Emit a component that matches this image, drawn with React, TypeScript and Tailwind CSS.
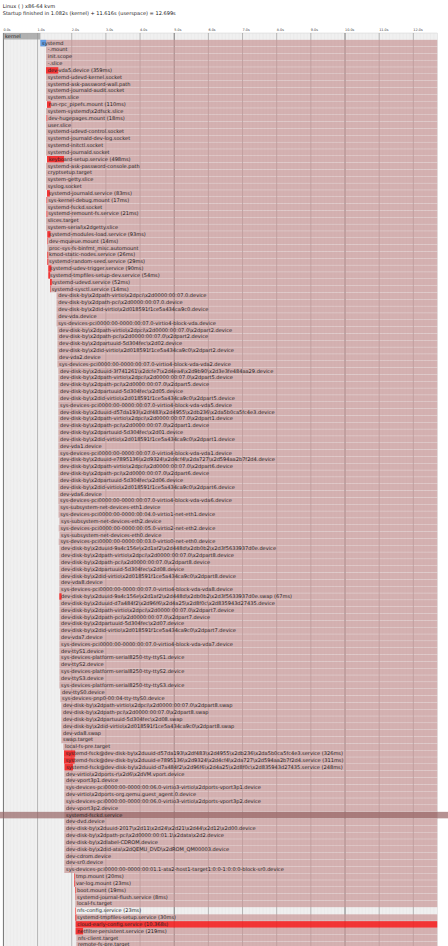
// systemd-analyze plot, bars are in chart units (100 units = 1s, 20 units = 1 row)
const S = 0.3416;
const CHART_H = 925;
const TOTAL = 1269.9;
const ROW = 20;

type Row = { name: string; x: number; ms?: number; noActive?: boolean; deact?: boolean; toEnd?: boolean };

const by = 'dev-disk-by\\x2d';
const pci7 = 'sys-devices-pci0000:00-0000:00:07.0-virtio4-block-vda';

function partRows(n: number, x: number, uuid: string | null): Row[] {
  const out: Row[] = [];
  if (uuid) out.push({ name: `${by}uuid-${uuid}.device`, x });
  out.push(
    { name: `${by}path-virtio\\x2dpci\\x2d0000:00:07.0\\x2dpart${n}.device`, x },
    { name: `${by}path-pci\\x2d0000:00:07.0\\x2dpart${n}.device`, x },
    { name: `${by}partuuid-5d304fec\\x2d0${n}.device`, x },
    { name: `${by}id-virtio\\x2d018591f1ce5a434ca9c0\\x2dpart${n}.device`, x },
    { name: `dev-vda${n}.device`, x },
    { name: `${pci7}-vda${n}.device`, x },
  );
  return out;
}

const rows: Row[] = [
  { name: '-.mount', x: 46 },
  { name: 'init.scope', x: 46 },
  { name: '-.slice', x: 46 },
  { name: 'dev-vda5.device', x: 46, ms: 359 },
  { name: 'systemd-udevd-kernel.socket', x: 46 },
  { name: 'systemd-ask-password-wall.path', x: 46 },
  { name: 'systemd-journald-audit.socket', x: 46 },
  { name: 'system.slice', x: 46 },
  { name: 'run-rpc_pipefs.mount', x: 47, ms: 110 },
  { name: 'system-systemd\\x2dfsck.slice', x: 46 },
  { name: 'dev-hugepages.mount', x: 46.5, ms: 18 },
  { name: 'user.slice', x: 46 },
  { name: 'systemd-udevd-control.socket', x: 46 },
  { name: 'systemd-journald-dev-log.socket', x: 46 },
  { name: 'systemd-initctl.socket', x: 46 },
  { name: 'systemd-journald.socket', x: 46 },
  { name: 'keyboard-setup.service', x: 47, ms: 498 },
  { name: 'systemd-ask-password-console.path', x: 46 },
  { name: 'cryptsetup.target', x: 46 },
  { name: 'system-getty.slice', x: 46 },
  { name: 'syslog.socket', x: 46 },
  { name: 'systemd-journald.service', x: 47, ms: 83 },
  { name: 'sys-kernel-debug.mount', x: 46.5, ms: 17 },
  { name: 'systemd-fsckd.socket', x: 46 },
  { name: 'systemd-remount-fs.service', x: 46.5, ms: 21 },
  { name: 'slices.target', x: 46 },
  { name: 'system-serial\\x2dgetty.slice', x: 46 },
  { name: 'systemd-modules-load.service', x: 47.3, ms: 93 },
  { name: 'dev-mqueue.mount', x: 47.3, ms: 14 },
  { name: 'proc-sys-fs-binfmt_misc.automount', x: 47.3 },
  { name: 'kmod-static-nodes.service', x: 47.3, ms: 26 },
  { name: 'systemd-random-seed.service', x: 47.3, ms: 29 },
  { name: 'systemd-udev-trigger.service', x: 48.3, ms: 90 },
  { name: 'systemd-tmpfiles-setup-dev.service', x: 48.3, ms: 54 },
  { name: 'systemd-udevd.service', x: 50, ms: 52 },
  { name: 'systemd-sysctl.service', x: 50, ms: 14 },
  { name: `${by}path-virtio\\x2dpci\\x2d0000:00:07.0.device`, x: 56.5 },
  { name: `${by}path-pci\\x2d0000:00:07.0.device`, x: 56.5 },
  { name: `${by}id-virtio\\x2d018591f1ce5a434ca9c0.device`, x: 56.5 },
  { name: 'dev-vda.device', x: 56.5 },
  { name: `${pci7}.device`, x: 56.5 },
  ...partRows(2, 57.4, null),
  ...partRows(5, 58.3, '3f741261\\x2dcfe7\\x2d4ea4\\x2d9b90\\x2d3e3fe484aa29').slice(0, 5),
  { name: `${pci7}-vda5.device`, x: 58.3 },
  ...partRows(1, 58.3, 'd57da193\\x2df483\\x2d4955\\x2db236\\x2da5b0ca5fc4e3'),
  ...partRows(6, 58.3, 'e7895136\\x2d9324\\x2d4cf4\\x2da727\\x2d594aa2b7f2d4'),
  { name: 'sys-subsystem-net-devices-eth1.device', x: 58.5 },
  { name: 'sys-devices-pci0000:00-0000:00:04.0-virtio1-net-eth1.device', x: 58.5 },
  { name: 'sys-subsystem-net-devices-eth2.device', x: 59.4 },
  { name: 'sys-devices-pci0000:00-0000:00:05.0-virtio2-net-eth2.device', x: 58.7 },
  { name: 'sys-subsystem-net-devices-eth0.device', x: 59.4 },
  { name: 'sys-devices-pci0000:00-0000:00:03.0-virtio0-net-eth0.device', x: 58.7 },
  ...partRows(8, 59.3, '9a4c156e\\x2d1af2\\x2d448d\\x2db0b2\\x2d3f5633937d0e'),
  { name: `${by}uuid-9a4c156e\\x2d1af2\\x2d448d\\x2db0b2\\x2d3f5633937d0e.swap`, x: 59.3, ms: 67 },
  ...partRows(7, 59.4, 'd7a484f2\\x2d96f6\\x2d4a25\\x2d8f0c\\x2d835943d27435'),
  { name: 'dev-ttyS1.device', x: 59.4 },
  { name: 'sys-devices-platform-serial8250-tty-ttyS1.device', x: 59.4 },
  { name: 'dev-ttyS2.device', x: 59.4 },
  { name: 'sys-devices-platform-serial8250-tty-ttyS2.device', x: 59.4 },
  { name: 'dev-ttyS3.device', x: 59.4 },
  { name: 'sys-devices-platform-serial8250-tty-ttyS3.device', x: 59.4 },
  { name: 'dev-ttyS0.device', x: 60.3 },
  { name: 'sys-devices-pnp0-00:04-tty-ttyS0.device', x: 60.3 },
  { name: `${by}path-virtio\\x2dpci\\x2d0000:00:07.0\\x2dpart8.swap`, x: 61.3 },
  { name: `${by}path-pci\\x2d0000:00:07.0\\x2dpart8.swap`, x: 61.3 },
  { name: `${by}partuuid-5d304fec\\x2d08.swap`, x: 61.3 },
  { name: `${by}id-virtio\\x2d018591f1ce5a434ca9c0\\x2dpart8.swap`, x: 61.3 },
  { name: 'dev-vda8.swap', x: 61.3 },
  { name: 'swap.target', x: 61.3 },
  { name: 'local-fs-pre.target', x: 63.3 },
  { name: `systemd-fsck@${by}uuid-d57da193\\x2df483\\x2d4955\\x2db236\\x2da5b0ca5fc4e3.service`, x: 64, ms: 326 },
  { name: `systemd-fsck@${by}uuid-e7895136\\x2d9324\\x2d4cf4\\x2da727\\x2d594aa2b7f2d4.service`, x: 64, ms: 311 },
  { name: `systemd-fsck@${by}uuid-d7a484f2\\x2d96f6\\x2d4a25\\x2d8f0c\\x2d835943d27435.service`, x: 64.5, ms: 248 },
  { name: 'dev-virtio\\x2dports-r\\x2d6\\x2dVM.vport.device', x: 64.3 },
  { name: 'dev-vport3p1.device', x: 64.3 },
  { name: 'sys-devices-pci0000:00-0000:00:06.0-virtio3-virtio\\x2dports-vport3p1.device', x: 64.3 },
  { name: 'dev-virtio\\x2dports-org.qemu.guest_agent.0.device', x: 64.3 },
  { name: 'sys-devices-pci0000:00-0000:00:06.0-virtio3-virtio\\x2dports-vport3p2.device', x: 64.3 },
  { name: 'dev-vport3p2.device', x: 64.3 },
  { name: 'systemd-fsckd.service', x: 64.3, deact: true },
  { name: 'dev-dvd.device', x: 64.3 },
  { name: `${by}uuid-2017\\x2d11\\x2d24\\x2d21\\x2d44\\x2d12\\x2d00.device`, x: 64.3 },
  { name: `${by}path-pci\\x2d0000:00:01.1\\x2data\\x2d2.device`, x: 64.3 },
  { name: `${by}label-CDROM.device`, x: 64.3 },
  { name: `${by}id-ata\\x2dQEMU_DVD\\x2dROM_QM00003.device`, x: 64.3 },
  { name: 'dev-cdrom.device', x: 64.3 },
  { name: 'dev-sr0.device', x: 64.3 },
  { name: 'sys-devices-pci0000:00-0000:00:01.1-ata2-host1-target1:0:0-1:0:0:0-block-sr0.device', x: 64.3 },
  { name: 'tmp.mount', x: 74.3, ms: 20 },
  { name: 'var-log.mount', x: 74.3, ms: 23 },
  { name: 'boot.mount', x: 75.3, ms: 19 },
  { name: 'systemd-journal-flush.service', x: 75.3, ms: 8 },
  { name: 'local-fs.target', x: 75.3 },
  { name: 'nfs-config.service', x: 75.3, ms: 23, noActive: true },
  { name: 'systemd-tmpfiles-setup.service', x: 75.3, ms: 30 },
  { name: 'cloud-early-config.service', x: 75.6, ms: 10368, toEnd: true },
  { name: 'netfilter-persistent.service', x: 75.6, ms: 219 },
  { name: 'nfs-client.target', x: 76.3 },
  { name: 'remote-fs-pre.target', x: 76.3 },
];

const toUnits = (px: number) => (px - 3.4) / S;

function label(r: Row) {
  if (!r.ms) return r.name;
  return r.ms >= 1000 ? `${r.name} (${(r.ms / 1000).toFixed(3)}s)` : `${r.name} (${r.ms}ms)`;
}

function Grid() {
  const lines = [];
  for (let i = 0; i * 10 <= TOTAL; i++) {
    const x = i * 10;
    if (i % 10 === 0) {
      lines.push(<line key={i} x1={x} x2={x} y1={0} y2={(rows.length + 4) * ROW} strokeWidth={i % 50 === 0 ? 2 : 1} className="stroke-[#404040]" />);
      lines.push(
        <text key={`t${i}`} x={x} y={-5} className="fill-[#444] text-[10px]">
          {(i / 10).toFixed(1)}s
        </text>,
      );
    } else {
      lines.push(<line key={i} x1={x} x2={x} y1={0} y2={(rows.length + 4) * ROW} strokeWidth={1} className="stroke-[#e0e0e0]" />);
    }
  }
  return <g>{lines}</g>;
}

function UnitRow({ r, i }: { r: Row; i: number }) {
  const x = toUnits(r.x);
  const y = (i + 2) * ROW;
  const red = r.toEnd ? TOTAL - x : r.ms ? r.ms / 10 : 0;
  return (
    <g>
      {!r.noActive && <rect x={x} y={y} width={TOTAL - x} height={ROW - 1} className="fill-[#c89696] opacity-70" />}
      {r.deact && <rect x={-60} y={y} width={1500} height={ROW - 1} className="fill-[#966464] opacity-70" />}
      {red > 0 && <rect x={x} y={y} width={red} height={ROW - 1} className="fill-[#ff0000] opacity-70" />}
      <text x={x + 5} y={y + 14} className="fill-[#222] text-[14.8px]">
        {label(r)}
      </text>
    </g>
  );
}

export default function App() {
  return (
    <div className="h-[946px] w-[448px] overflow-hidden bg-white font-['DejaVu_Sans',sans-serif] text-[#222] [text-rendering:geometricPrecision]">
      <div className="pl-[2.7px] pt-[3.5px] pb-[3.5px] text-[5.05px] leading-[7px]">
        <div>Linux ( ) x86-64 kvm</div>
        <div>Startup finished in 1.082s (kernel) + 11.616s (userspace) = 12.699s</div>
      </div>
      <svg width={448} height={CHART_H} viewBox={`0 0 ${448 / S} ${CHART_H / S}`} className="block">
        <g transform={`translate(10, ${12 / S})`}>
          <rect x={0} y={0} width={TOTAL} height={(rows.length + 4) * ROW} className="fill-[#f0f0f0] stroke-[#c0c0c0]" />
          <Grid />
          <rect x={0} y={0} width={108.2} height={ROW - 1} className="fill-[#969696] opacity-70" />
          <text x={5} y={14} className="fill-[#222] text-[14.8px]">kernel</text>
          <rect x={108.2} y={ROW} width={TOTAL - 108.2} height={ROW - 1} className="fill-[#c89696] opacity-70" />
          <rect x={108.2} y={ROW} width={17} height={ROW - 1} className="fill-[#3296fa] opacity-70" />
          <text x={113.2} y={ROW + 14} className="fill-[#222] text-[14.8px]">systemd</text>
          {rows.map((r, i) => (
            <UnitRow key={i} r={r} i={i} />
          ))}
        </g>
      </svg>
    </div>
  );
}
